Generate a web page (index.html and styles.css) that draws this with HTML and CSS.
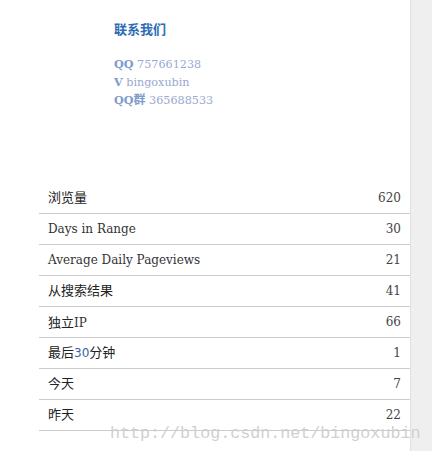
FILE: index.html
```html
<!DOCTYPE html>
<html>
<head>
<meta charset="utf-8">
<link rel="stylesheet" href="styles.css">
</head>
<body>
<div class="page">
  <div class="main">
    <div class="contact">
      <div class="title">联系我们</div>
      <div class="lines">
        <div class="line"><b>QQ</b> 757661238</div>
        <div class="line"><b>V</b> bingoxubin</div>
        <div class="line"><b>QQ<span class="cj">群</span></b> 365688533</div>
      </div>
    </div>
    <div class="stats">
      <div class="row"><span class="label cjk">浏览量</span><span class="num">620</span></div>
      <div class="row"><span class="label">Days in Range</span><span class="num">30</span></div>
      <div class="row"><span class="label">Average Daily Pageviews</span><span class="num">21</span></div>
      <div class="row"><span class="label cjk">从搜索结果</span><span class="num">41</span></div>
      <div class="row"><span class="label"><span class="cjk">独立</span>IP</span><span class="num">66</span></div>
      <div class="row"><span class="label cjk">最后<span class="digits">30</span>分钟</span><span class="num">1</span></div>
      <div class="row"><span class="label cjk">今天</span><span class="num">7</span></div>
      <div class="row"><span class="label cjk">昨天</span><span class="num">22</span></div>
    </div>
  </div>
  <div class="side"></div>
</div>
<div class="watermark">http://blog.csdn.net/bingoxubin</div>
</body>
</html>
```
FILE: styles.css
```css
html, body {
  margin: 0;
  padding: 0;
  background: #fff;
}
body {
  font-family: "DejaVu Serif", "Noto Sans CJK SC", serif;
  font-size: 12px;
  color: #333;
  position: relative;
  height: 451px;
  overflow: hidden;
}
.page {
  display: flex;
  height: 451px;
}
.main {
  width: 410px;
  padding-top: 20px;
}
.side {
  flex: 1;
  background: #efefef;
  border-left: 1px solid #e0e0e0;
}
.contact {
  margin-left: 114px;
}
.title {
  font-family: "Noto Sans CJK SC", sans-serif;
  font-weight: bold;
  font-size: 13px;
  color: #2d6bb3;
  height: 18px;
  line-height: 18px;
}
.lines {
  margin-top: 17px;
  font-size: 11.2px;
  color: #9aa8cf;
}
.line {
  height: 18px;
  line-height: 18px;
  overflow: visible;
}
.lines b {
  color: #7d9ccc;
  font-weight: bold;
}
.cj {
  font-size: 12px;
  line-height: 1;
}
.stats {
  margin-top: 74px;
  margin-left: 39px;
}
.row {
  display: flex;
  justify-content: space-between;
  align-items: center;
  height: 30px;
  border-bottom: 1px solid #cccccc;
  padding: 0 9px;
}
.label {
  color: #333;
}
.cjk {
  font-family: "Noto Sans CJK SC", sans-serif;
  font-size: 13px;
  line-height: 14px;
  color: #222;
}
.row > .cjk {
  margin-top: -2px;
}
.digits {
  font-family: "DejaVu Sans", sans-serif;
  font-size: 12px;
  color: #3a5fa8;
}
.num {
  color: #444;
}
.watermark {
  position: absolute;
  left: 110px;
  top: 422px;
  font-family: "Liberation Mono", monospace;
  font-size: 16.7px;
  color: #d0d0d0;
  line-height: 24px;
  white-space: nowrap;
}
```
